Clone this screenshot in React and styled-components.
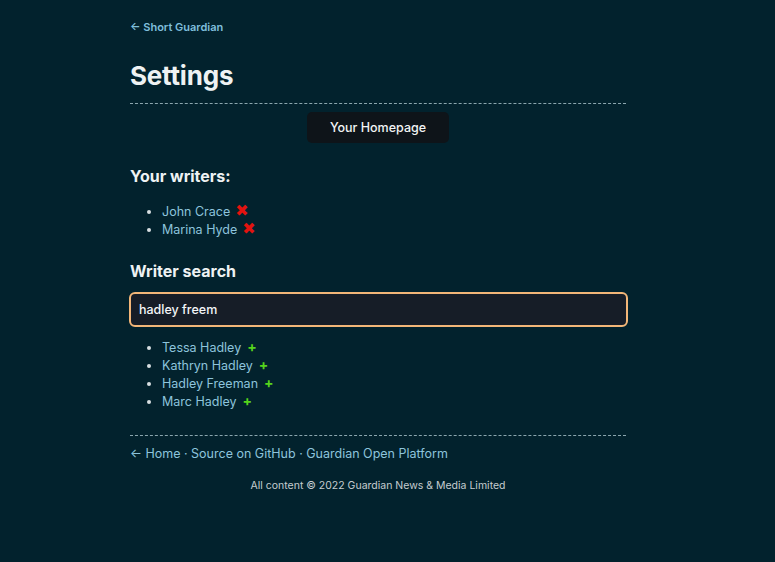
import styled, { createGlobalStyle } from "styled-components";

const Global = createGlobalStyle`
  html, body { margin:0; padding:0; background:#02222d; }
  body { font-family: Inter, "Noto Sans", "Liberation Sans", sans-serif; color:#e8eef0; min-height:562px; }
  a { color:#8dc4dc; text-decoration:none; }
`;

const Page = styled.div`
  width:496px; margin:0 0 0 130px; padding-top:20px; padding-bottom:60px;
`;
const Back = styled.a`
  display:block; font-size:11px; font-weight:600; line-height:14px; color:#7fbfdc;
`;
const Title = styled.h1`
  margin:25px 0 0; font-size:26px; font-weight:700; line-height:34px; letter-spacing:-0.2px; color:#eef2f3;
`;
const Rule = styled.hr`
  border:0; border-top:1px dashed #8ba6ae; margin:${p => p.$m || "10px 0 0"};
`;
const Nav = styled.div` display:flex; justify-content:center; margin-top:8px; `;
const Btn = styled.button`
  width:142px; height:31px; border:0; border-radius:5px; background:#0e1419;
  color:#f2f4f5; font:500 12.5px Inter, sans-serif; cursor:pointer;
`;
const H2 = styled.h2`
  margin:${p => p.$top || "24px"} 0 0; font-size:16px; font-weight:700; line-height:20px; color:#eef2f3;
`;
const List = styled.ul`
  margin:${p => p.$top || "16px"} 0 0; padding-left:32px; font-size:12.5px; line-height:18px;
  li { height:18px; }
  li::marker { color:#d8dfe2; }
`;
const Name = styled.a` color:#8dc4dc; `;
const Remove = styled.span`
  color:#e3130f; font-size:16px; line-height:18px; font-weight:900; margin-left:5px;
  font-family:"DejaVu Sans", sans-serif;
`;
const Add = styled.span` color:#56d41c; font-size:14px; line-height:18px; font-weight:700; margin-left:6px; `;
const Input = styled.input`
  display:block; box-sizing:border-box; width:499px; height:35px; margin:11px 0 0 -1px;
  border:2px solid #f2b678; border-radius:6px; background:#161d27; color:#f4f6f7;
  padding:0 8px; font:500 12.5px Inter, sans-serif; outline:none;
`;
const Footer = styled.footer` font-size:12.5px; line-height:18px; margin-top:9px; color:#8dc4dc; `;
const Copy = styled.p`
  margin:16px 0 0; text-align:center; font-size:10.5px; color:#c5cdd0;
`;

const mine = ["John Crace", "Marina Hyde"];
const found = ["Tessa Hadley", "Kathryn Hadley", "Hadley Freeman", "Marc Hadley"];

export default function App() {
  return (
    <>
      <Global />
      <Page>
        <Back href="#">← Short Guardian</Back>
        <Title>Settings</Title>
        <Rule />
        <Nav><Btn>Your Homepage</Btn></Nav>
        <H2 $top="23px">Your writers:</H2>
        <List $top="16px">
          {mine.map(n => <li key={n}><Name href="#">{n}</Name><Remove>✖</Remove></li>)}
        </List>
        <H2 $top="23px">Writer search</H2>
        <Input defaultValue="hadley freem" />
        <List $top="11px">
          {found.map(n => <li key={n}><Name href="#">{n}</Name><Add>+</Add></li>)}
        </List>
        <Rule $m="25px 0 0" />
        <Footer>← Home · Source on GitHub · Guardian Open Platform</Footer>
        <Copy>All content © 2022 Guardian News &amp; Media Limited</Copy>
      </Page>
    </>
  );
}
